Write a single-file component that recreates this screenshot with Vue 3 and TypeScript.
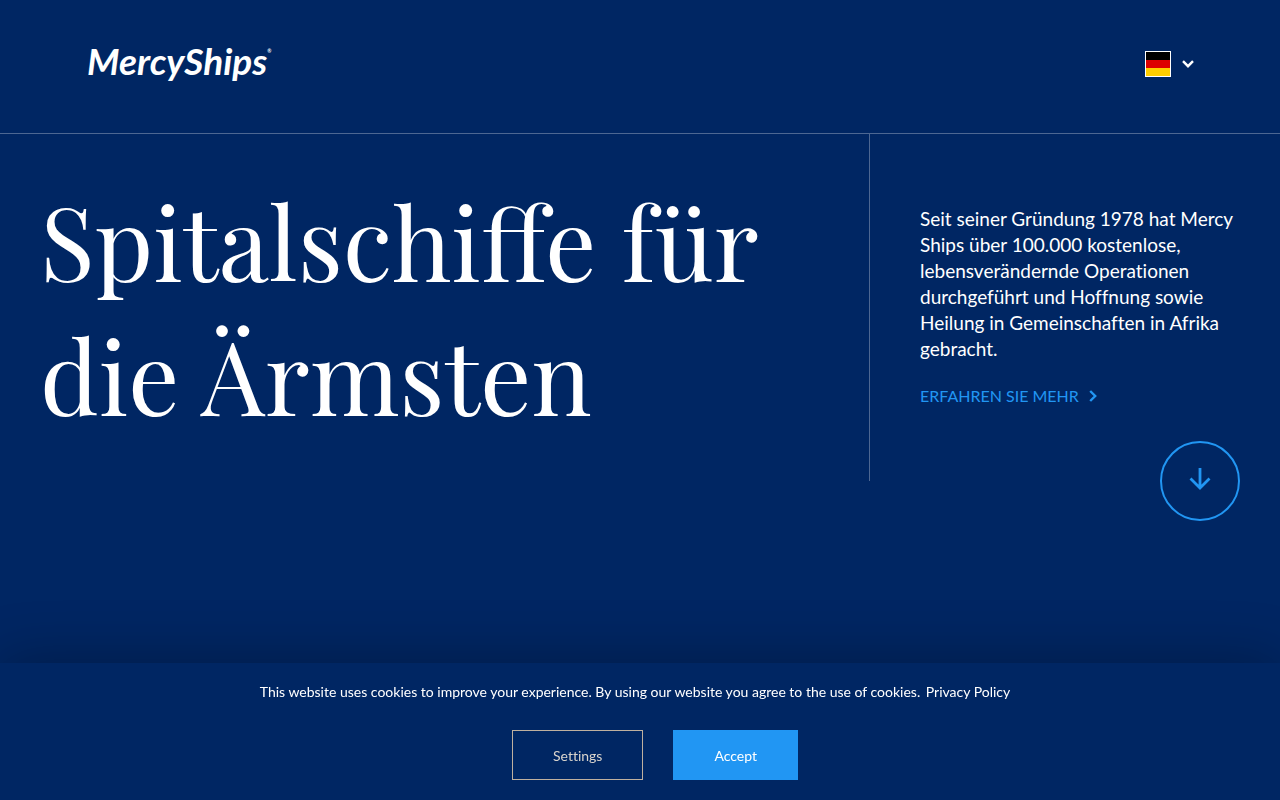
<script setup lang="ts">
import { ref } from 'vue'

const showCookies = ref(true)
const flagStripes: string[] = ['#000000', '#dd0000', '#ffce00']
</script>

<template>
  <div class="page">
    <header class="header">
      <a class="logo" href="#">MercyShips<span class="mark">®</span></a>
      <button class="language" type="button" aria-label="Deutsch" aria-haspopup="listbox">
        <svg class="flag" viewBox="0 0 26 26" aria-hidden="true">
          <rect width="26" height="26" fill="#ffffff" />
          <rect
            v-for="(color, i) in flagStripes"
            :key="color"
            x="1"
            :y="1 + i * 8"
            width="24"
            height="8"
            :fill="color"
          />
        </svg>
        <svg class="chevron" viewBox="0 0 12 8" aria-hidden="true">
          <path d="M1 1.200l5 5 5-5" fill="none" stroke="#ffffff" stroke-width="2.400" />
        </svg>
      </button>
    </header>

    <main class="hero">
      <h1 class="title">Spitalschiffe für die Ärmsten</h1>
      <section class="intro">
        <p class="lead">
          Seit seiner Gründung 1978 hat Mercy Ships über 100.000 kostenlose,
          lebensverändernde Operationen durchgeführt und Hoffnung sowie Heilung in
          Gemeinschaften in Afrika gebracht.
        </p>
        <a class="more" href="#mehr">
          ERFAHREN SIE MEHR
          <svg class="arrow" viewBox="0 0 8 12" aria-hidden="true">
            <path d="M1.200 1l5 5-5 5" fill="none" stroke="currentColor" stroke-width="2.400" />
          </svg>
        </a>
      </section>
      <a class="scroll" href="#mehr" aria-label="Nach unten">
        <svg class="down" viewBox="0 0 22 22" aria-hidden="true">
          <path
            d="M11 0v20M1.500 10.500l9.500 9.500 9.500-9.500"
            fill="none"
            stroke="currentColor"
            stroke-width="2.800"
          />
        </svg>
      </a>
    </main>

    <aside v-if="showCookies" class="cookies" aria-label="Cookies">
      <p class="notice">
        This website uses cookies to improve your experience. By using our website you agree to
        the use of cookies. <a class="policy" href="#privacy">Privacy Policy</a>
      </p>
      <div class="actions">
        <button class="btn settings" type="button">Settings</button>
        <button class="btn accept" type="button" @click="showCookies = false">Accept</button>
      </div>
    </aside>
  </div>
</template>

<style>
body {
  margin: 0;
  background: #002663;
}
</style>

<style scoped>
.page {
  min-height: 100vh;
  background: #002663;
  color: #ffffff;
  font-family: Lato, "Liberation Sans", sans-serif;
}
.header {
  display: flex;
  align-items: center;
  justify-content: space-between;
  box-sizing: border-box;
  min-height: 134px;
  padding: 0 81px 6px 87px;
  border-bottom: 1px solid #4d6792;
}
.logo {
  display: flex;
  align-items: flex-start;
  padding-bottom: 6px;
  color: #ffffff;
  font-size: 37px;
  font-weight: 700;
  font-style: italic;
  line-height: 44px;
  text-decoration: none;
}
.mark {
  font-size: 5px;
  line-height: 24px;
}
.language {
  display: flex;
  align-items: center;
  gap: 11px;
  padding: 5px;
  border: 0;
  background: none;
  cursor: pointer;
}
.flag {
  width: 26px;
  height: 26px;
}
.chevron {
  width: 12px;
  height: 8px;
}
.hero {
  position: relative;
  display: grid;
  grid-template-columns: minmax(0, 1fr) 411px;
}
.title {
  margin: 0;
  padding: 39px 40px 40px;
  font-family: "Playfair Display", "Liberation Serif", serif;
  font-size: 101px;
  font-weight: 400;
  line-height: 134px;
}
.intro {
  box-sizing: border-box;
  padding: 72px 40px 72px 50px;
  border-left: 1px solid #4d6792;
}
.lead {
  margin: 0 0 21px;
  font-size: 19px;
  font-variant-ligatures: no-common-ligatures;
  line-height: 26px;
}
.more {
  display: flex;
  align-items: center;
  gap: 10px;
  width: fit-content;
  color: #2196f3;
  font-size: 16px;
  line-height: 26px;
  text-decoration: none;
}
.arrow {
  width: 8px;
  height: 12px;
}
.scroll {
  position: absolute;
  right: 40px;
  bottom: -40px;
  display: flex;
  align-items: center;
  justify-content: center;
  box-sizing: border-box;
  width: 80px;
  height: 80px;
  padding-bottom: 4px;
  border: 2px solid #2196f3;
  border-radius: 50%;
  color: #2196f3;
}
.down {
  width: 22px;
  height: 22px;
}
.cookies {
  position: fixed;
  right: 0;
  bottom: 0;
  left: 0;
  padding: 18px 20px 20px;
  background: #002663;
  box-shadow: 0 0 60px rgba(0, 0, 0, 0.3);
  text-align: center;
}
.notice {
  margin: 0 10px 27px 0;
  font-size: 14px;
  line-height: 22px;
}
.policy {
  margin-left: 2px;
  color: #ffffff;
  text-decoration: none;
}
.actions {
  display: flex;
  justify-content: center;
  gap: 30px;
  padding-left: 30px;
}
.btn {
  height: 50px;
  padding: 0 40px;
  border: 1px solid #2196f3;
  font-family: inherit;
  font-size: 14px;
  font-variant-ligatures: no-common-ligatures;
  cursor: pointer;
}
.settings {
  border-color: #bfb09f;
  background: none;
  color: #d9d4cd;
}
.accept {
  background: #2196f3;
  color: #ffffff;
}
</style>
